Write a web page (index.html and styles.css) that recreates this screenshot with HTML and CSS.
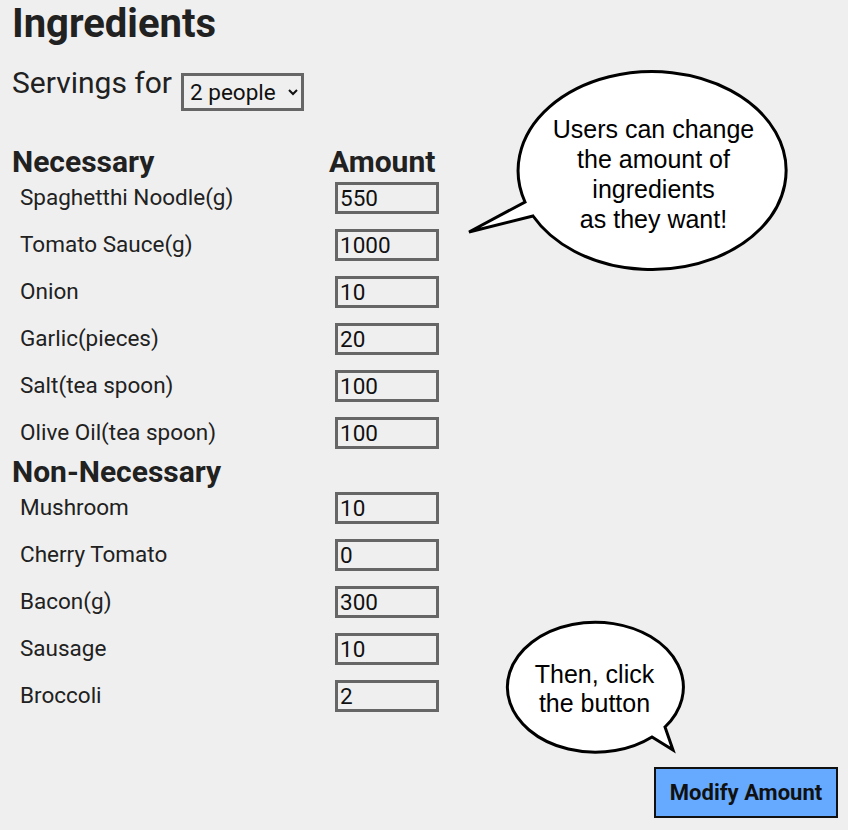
FILE: index.html
```html
<!DOCTYPE html>
<html>
<head>
  <title>Ingredients</title>
  <link rel="stylesheet" href="styles.css">
</head>
<body>
  <h1 class="title">Ingredients</h1>

  <div class="servings">
    <span class="servings-label">Servings for</span>
    <select class="servings-select">
      <option>1 person</option>
      <option selected>2 people</option>
      <option>3 people</option>
      <option>4 people</option>
    </select>
  </div>

  <div class="section">
    <div class="section-head">
      <h2 class="head-name">Necessary</h2>
      <h2 class="head-amount">Amount</h2>
    </div>
    <div class="rows">
      <div class="row"><span class="item">Spaghetthi Noodle(g)</span><input class="amount" type="text" value="550"></div>
      <div class="row"><span class="item">Tomato Sauce(g)</span><input class="amount" type="text" value="1000"></div>
      <div class="row"><span class="item">Onion</span><input class="amount" type="text" value="10"></div>
      <div class="row"><span class="item">Garlic(pieces)</span><input class="amount" type="text" value="20"></div>
      <div class="row"><span class="item">Salt(tea spoon)</span><input class="amount" type="text" value="100"></div>
      <div class="row"><span class="item">Olive Oil(tea spoon)</span><input class="amount" type="text" value="100"></div>
    </div>
  </div>

  <div class="section section-extra">
    <div class="section-head">
      <h2 class="head-name">Non-Necessary</h2>
    </div>
    <div class="rows">
      <div class="row"><span class="item">Mushroom</span><input class="amount" type="text" value="10"></div>
      <div class="row"><span class="item">Cherry Tomato</span><input class="amount" type="text" value="0"></div>
      <div class="row"><span class="item">Bacon(g)</span><input class="amount" type="text" value="300"></div>
      <div class="row"><span class="item">Sausage</span><input class="amount" type="text" value="10"></div>
      <div class="row"><span class="item">Broccoli</span><input class="amount" type="text" value="2"></div>
    </div>
  </div>

  <div class="actions">
    <button class="modify-button">Modify Amount</button>
  </div>

  <!-- speech bubbles -->
  <svg class="bubble bubble-change" width="340" height="215" viewBox="0 0 340 215">
    <path class="bubble-shape" d="M 73 146 A 134 99 0 1 0 65 132 L 9 162 Z"/>
    <text class="bubble-text" x="193.5" y="68">Users can change</text>
    <text class="bubble-text" x="193.5" y="98">the amount of</text>
    <text class="bubble-text" x="193.5" y="128">ingredients</text>
    <text class="bubble-text" x="193.5" y="158">as they want!</text>
  </svg>

  <svg class="bubble bubble-click" width="200" height="150" viewBox="0 0 200 150">
    <path class="bubble-shape" d="M 170 115 A 88 65 0 1 0 157 125 L 178 138 Z"/>
    <text class="bubble-text" x="99.5" y="70.5">Then, click</text>
    <text class="bubble-text" x="99.5" y="99.5">the button</text>
  </svg>
</body>
</html>
```

FILE: styles.css
```css
* {
  box-sizing: border-box;
}

body {
  margin: 0;
  padding: 0 10px 0 12px;
  background: #efefef;
  color: #212121;
  font-family: Roboto, "Liberation Sans", Arial, sans-serif;
}

.title {
  margin: 4px 0 0;
  font-size: 40px;
  line-height: 40px;
  font-weight: 700;
}

.servings {
  display: flex;
  align-items: flex-start;
  gap: 9px;
  margin-top: 24px;
}

.servings-label {
  font-size: 30px;
  line-height: 30px;
}

.servings-select {
  margin-top: 5px;
  width: 123px;
  height: 38px;
  padding: 0 2px;
  border: 3px solid #666;
  border-radius: 0;
  background: #efefef;
  color: #111;
  font-family: Roboto, "Liberation Sans", Arial, sans-serif;
  font-size: 22.5px;
}

.section {
  margin-top: 36px;
}

.section-extra {
  margin-top: 8px;
}

.section-head {
  display: flex;
}

.section-head h2 {
  margin: 0;
  font-size: 30px;
  line-height: 30px;
  font-weight: 700;
}

.head-name {
  width: 317px;
}

.rows {
  display: flex;
  flex-direction: column;
  gap: 15px;
  margin-top: 5px;
}

.row {
  display: flex;
  align-items: flex-start;
  height: 32px;
}

.item {
  width: 323px;
  padding-left: 8px;
  font-size: 22.5px;
  line-height: 30px;
}

.amount {
  width: 104px;
  height: 32px;
  padding: 0 2px;
  border: 3px solid #666;
  border-radius: 0;
  background: transparent;
  color: #111;
  font-family: Roboto, "Liberation Sans", Arial, sans-serif;
  font-size: 22.5px;
}

.actions {
  display: flex;
  justify-content: flex-end;
  margin-top: 55px;
}

.modify-button {
  width: 184px;
  height: 51px;
  background: #66aaff;
  border: 2px solid #111;
  color: #111;
  font-family: Roboto, "Liberation Sans", Arial, sans-serif;
  font-size: 22px;
  font-weight: 700;
  cursor: pointer;
}

.bubble {
  position: absolute;
}

.bubble-change {
  left: 460px;
  top: 70px;
}

.bubble-click {
  left: 495px;
  top: 612px;
}

.bubble-shape {
  fill: #fff;
  stroke: #000;
  stroke-width: 3;
  stroke-linejoin: miter;
}

.bubble-text {
  font-family: "Liberation Sans", Arial, sans-serif;
  font-size: 25px;
  fill: #000;
  text-anchor: middle;
}
```
